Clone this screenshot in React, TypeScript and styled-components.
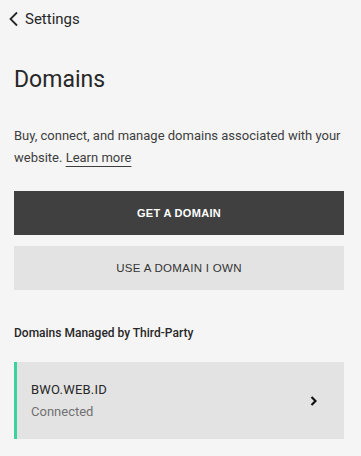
import React from 'react';
import styled, { createGlobalStyle } from 'styled-components';

const GlobalStyle = createGlobalStyle`
  html, body {
    margin: 0;
    padding: 0;
    background: #f5f5f5;
    font-family: Roboto, "Liberation Sans", Arial, sans-serif;
    color: #272727;
  }
`;

const Page = styled.div`
  width: 361px;
  height: 456px;
  box-sizing: border-box;
  padding: 0 17px 0 14px;
  background: #f5f5f5;
  overflow: hidden;
`;

const BackLink = styled.a`
  display: flex;
  align-items: center;
  gap: 5px;
  height: 38px;
  margin-left: -6px;
  font-size: 15px;
  color: #272727;
  text-decoration: none;
  cursor: pointer;
`;

const Title = styled.h1`
  margin: 28px 0 0;
  font-size: 23px;
  font-weight: 400;
  line-height: 28px;
  color: #272727;
`;

const Description = styled.p`
  margin: 31px 0 0;
  font-size: 13px;
  line-height: 22px;
  color: #3e3e3e;
`;

const LearnMore = styled.a`
  color: #3e3e3e;
  text-decoration: underline;
  text-decoration-thickness: 1px;
  text-underline-offset: 4px;
`;

const Button = styled.button<{ $primary?: boolean }>`
  display: block;
  width: 100%;
  height: 44px;
  border: none;
  margin-top: ${(p) => (p.$primary ? '22px' : '11px')};
  background: ${(p) => (p.$primary ? '#404040' : '#e3e3e3')};
  color: ${(p) => (p.$primary ? '#ffffff' : '#333333')};
  font-family: "Liberation Sans", Arial, sans-serif;
  font-size: ${(p) => (p.$primary ? '11px' : '11.5px')};
  font-weight: ${(p) => (p.$primary ? 700 : 400)};
  letter-spacing: 0.3px;
  cursor: pointer;
`;

const SectionLabel = styled.h2`
  margin: 35px 0 0;
  font-size: 12px;
  font-weight: 500;
  line-height: 16px;
  color: #272727;
`;

const DomainCard = styled.div`
  display: flex;
  align-items: center;
  justify-content: space-between;
  height: 77px;
  margin-top: 21px;
  box-sizing: border-box;
  padding: 0 27px 0 14px;
  background: #e3e3e3;
  border-left: 3px solid #3ad29f;
  cursor: pointer;
`;

const DomainInfo = styled.div`
  display: flex;
  flex-direction: column;
  gap: 6px;
`;

const DomainName = styled.div`
  font-size: 13px;
  line-height: 16px;
  color: #272727;
  letter-spacing: 0.2px;
`;

const DomainStatus = styled.div`
  font-size: 13px;
  line-height: 16px;
  color: #717171;
`;

const ChevronLeft = () => (
  <svg width="12" height="16" viewBox="0 0 12 16" fill="none">
    <path d="M9 1.5 L2.5 8 L9 14.5" stroke="#272727" strokeWidth="1.8" />
  </svg>
);

const ChevronRight = () => (
  <svg width="7" height="10" viewBox="0 0 7 10" fill="none">
    <path d="M1.5 1 L5.5 5 L1.5 9" stroke="#111" strokeWidth="2.2" />
  </svg>
);

export default function App() {
  return (
    <>
      <GlobalStyle />
      <Page>
        <BackLink>
          <ChevronLeft />
          Settings
        </BackLink>
        <Title>Domains</Title>
        <Description>
          Buy, connect, and manage domains associated with your website.{' '}
          <LearnMore>Learn more</LearnMore>
        </Description>
        <Button $primary>GET A DOMAIN</Button>
        <Button>USE A DOMAIN I OWN</Button>
        <SectionLabel>Domains Managed by Third-Party</SectionLabel>
        <DomainCard>
          <DomainInfo>
            <DomainName>BWO.WEB.ID</DomainName>
            <DomainStatus>Connected</DomainStatus>
          </DomainInfo>
          <ChevronRight />
        </DomainCard>
      </Page>
    </>
  );
}
